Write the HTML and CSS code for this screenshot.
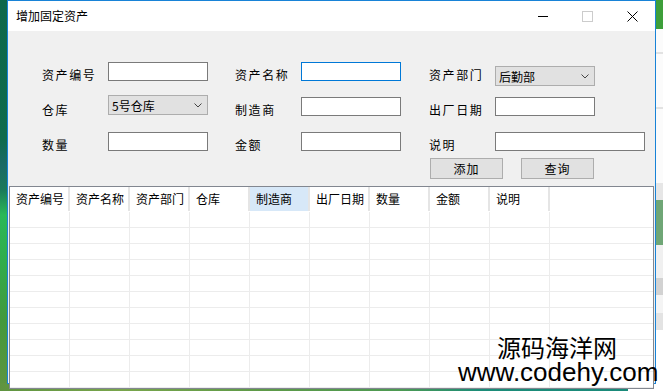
FILE: index.html
```html
<!DOCTYPE html>
<html lang="zh-CN">
<head>
    <meta charset="UTF-8">
    <title>增加固定资产</title>
    <link rel="stylesheet" href="styles.css">
</head>
<body>
    <div class="desk-right"></div>
    <div class="desk-bottom"></div>

    <div class="window">
        <div class="titlebar">
            <span class="title">增加固定资产</span>
            <div class="caption-btns">
                <span class="cap-btn">
                    <svg width="10" height="10" viewBox="0 0 10 10"><path d="M0 5.5H10" stroke="#000" stroke-width="1"/></svg>
                </span>
                <span class="cap-btn">
                    <svg width="11" height="11" viewBox="0 0 11 11"><rect x="0.5" y="0.5" width="10" height="10" fill="none" stroke="#ccc" stroke-width="1"/></svg>
                </span>
                <span class="cap-btn">
                    <svg width="11" height="11" viewBox="0 0 11 11"><path d="M0.5 0.5L10.5 10.5M10.5 0.5L0.5 10.5" stroke="#000" stroke-width="1"/></svg>
                </span>
            </div>
        </div>

        <div class="client">
            <div class="form">
                <div class="field">
                    <label>资产编号</label>
                    <input class="textbox" type="text">
                </div>
                <div class="field">
                    <label>资产名称</label>
                    <input class="textbox focused" type="text">
                </div>
                <div class="field">
                    <label>资产部门</label>
                    <div class="combo combo-dept">
                        <span>后勤部</span>
                        <svg width="8" height="5" viewBox="0 0 8 5"><path d="M0.5 0.5L4 4L7.5 0.5" fill="none" stroke="#444" stroke-width="1"/></svg>
                    </div>
                </div>

                <div class="field">
                    <label>仓库</label>
                    <div class="combo combo-store">
                        <span>5号仓库</span>
                        <svg width="8" height="5" viewBox="0 0 8 5"><path d="M0.5 0.5L4 4L7.5 0.5" fill="none" stroke="#444" stroke-width="1"/></svg>
                    </div>
                </div>
                <div class="field">
                    <label>制造商</label>
                    <input class="textbox" type="text">
                </div>
                <div class="field">
                    <label>出厂日期</label>
                    <input class="textbox" type="text">
                </div>

                <div class="field">
                    <label>数量</label>
                    <input class="textbox" type="text">
                </div>
                <div class="field">
                    <label>金额</label>
                    <input class="textbox" type="text">
                </div>
                <div class="field">
                    <label>说明</label>
                    <input class="textbox wide" type="text">
                </div>

                <div class="actions">
                    <button class="btn">添加</button>
                    <button class="btn">查询</button>
                </div>
            </div>

            <div class="grid">
                <div class="grid-row grid-head">
                    <div class="cell">资产编号</div>
                    <div class="cell">资产名称</div>
                    <div class="cell">资产部门</div>
                    <div class="cell">仓库</div>
                    <div class="cell selected">制造商</div>
                    <div class="cell">出厂日期</div>
                    <div class="cell">数量</div>
                    <div class="cell">金额</div>
                    <div class="cell">说明</div>
                    <div class="cell filler"></div>
                </div>
                <div class="grid-body" id="gridBody"></div>
            </div>
        </div>
    </div>

    <div class="watermark">
        <div class="wm-cn">源码海洋网</div>
        <div class="wm-en">www.codehy.com</div>
    </div>

    <script>
        // empty rows of the data grid
        let body = document.getElementById('gridBody');
        for (let r = 0; r < 11; r++) {
            let row = document.createElement('div');
            row.className = 'grid-row';
            for (let c = 0; c < 10; c++) {
                let cell = document.createElement('div');
                cell.className = c === 9 ? 'cell filler' : 'cell';
                row.appendChild(cell);
            }
            body.appendChild(row);
        }
    </script>
</body>
</html>
```

FILE: styles.css
```css
body {
    margin: 0;
    width: 663px;
    height: 391px;
    position: relative;
    overflow: hidden;
    font-family: "Noto Sans CJK SC", "Noto Sans", sans-serif;
    background: linear-gradient(to bottom,
        #0e684a 0, #0f6b4c 140px, #1a6a66 165px, #1b7a5a 190px,
        #2bb857 215px, #30ad4c 260px, #43993d 320px, #5f9440 391px);
}

.desk-right {
    position: absolute;
    left: 656px;
    top: 0;
    width: 7px;
    height: 391px;
    background: linear-gradient(to bottom,
        #3d9f3a 0, #3d9f3a 29px, #fbfbfb 29px, #fbfbfb 52px, #e2e2e2 52px, #e2e2e2 54px,
        #fbfbfb 54px, #fbfbfb 107px, #e2e2e2 107px, #e2e2e2 109px, #fbfbfb 109px,
        #fbfbfb 183px, #e6e6e6 183px, #e6e6e6 200px, #6fa676 200px, #6fa676 245px,
        #f0f0f0 245px, #f0f0f0 278px, #d2d2d2 278px, #d2d2d2 295px, #f4f4f4 295px,
        #f4f4f4 313px, #e3e3e3 313px, #e3e3e3 330px, #fff 330px);
}

.desk-bottom {
    position: absolute;
    left: 0;
    bottom: 0;
    width: 663px;
    height: 8px;
    background: linear-gradient(to right,
        #5f9440 0, #79a54c 120px, #5e9a48 260px, #4d9a52 400px, #1b8c78 480px,
        #1a8a7a 628px, #fff 628px);
}

.window {
    position: absolute;
    left: 7px;
    top: 0;
    width: 649px;
    height: 384px;
    box-sizing: border-box;
    border: 1px solid #1883d7;
    background-color: #f0f0f0;
    display: flex;
    flex-direction: column;
}

.titlebar {
    height: 30px;
    flex-shrink: 0;
    background-color: #fff;
    display: flex;
    align-items: center;
    justify-content: space-between;
}

.title {
    font-size: 12px;
    color: #000;
    padding-left: 8px;
    line-height: 30px;
}

.caption-btns {
    display: flex;
    height: 30px;
}

.cap-btn {
    width: 45px;
    display: flex;
    align-items: center;
    justify-content: center;
}

.client {
    flex: 1;
    display: flex;
    flex-direction: column;
}

.form {
    height: 155px;
    box-sizing: border-box;
    padding: 31px 0 0 34px;
    display: grid;
    grid-template-columns: 193px 194px 215px;
    grid-template-rows: 35px 35px 26px 21px;
}

.field {
    display: flex;
    align-items: flex-start;
}

.field label {
    width: 66px;
    flex-shrink: 0;
    padding-top: 3px;
    font-size: 12px;
    line-height: 19px;
    letter-spacing: 1.6px;
    color: #000;
}

.textbox {
    width: 100px;
    height: 19px;
    box-sizing: border-box;
    margin: 0;
    padding: 0 2px;
    border: 1px solid #7a7a7a;
    background-color: #fff;
    outline: none;
}

.textbox.focused {
    border-color: #0078d7;
}

.textbox.wide {
    width: 150px;
}

.combo {
    width: 100px;
    height: 20px;
    box-sizing: border-box;
    border: 1px solid #adadad;
    background-color: #e1e1e1;
    display: flex;
    align-items: center;
    justify-content: space-between;
    padding: 0 5px 0 3px;
    font-size: 12px;
    color: #000;
}

.combo-dept {
    margin-top: 4px;
}

.combo-store {
    margin-top: -2px;
}

.actions {
    grid-column: 3;
    display: flex;
    gap: 18px;
    padding-left: 1px;
}

.btn {
    width: 73px;
    height: 21px;
    box-sizing: border-box;
    border: 1px solid #adadad;
    background-color: #e1e1e1;
    font-family: "Noto Sans CJK SC", sans-serif;
    font-size: 12px;
    letter-spacing: 1px;
    color: #000;
    padding: 0;
}

.grid {
    flex: 1;
    margin: 0 1px 1px;
    border: 1px solid #828790;
    background-color: #fff;
    overflow: hidden;
}

.grid-row {
    display: grid;
    grid-template-columns: repeat(9, 60px) 1fr;
    height: 16px;
    box-sizing: border-box;
    border-bottom: 1px solid #ececec;
}

.grid-row .cell {
    border-right: 1px solid #ececec;
}

.grid-row .cell.filler {
    border-right: none;
}

.grid-head {
    height: 24px;
    border-bottom: none;
}

.grid-head .cell {
    font-size: 12px;
    line-height: 24px;
    padding-left: 6px;
    color: #000;
    border-right: 2px solid #e5e5e5;
    white-space: nowrap;
    overflow: hidden;
}

.grid-head .cell.selected {
    background-color: #d7e8f8;
}

.grid-body {
    padding-top: 1px;
}

.watermark {
    position: absolute;
    left: 458px;
    top: 336px;
    color: #000;
}

.wm-cn {
    font-family: "Noto Sans CJK SC", sans-serif;
    font-size: 24px;
    line-height: 22px;
    padding-left: 39px;
}

.wm-en {
    font-family: "Liberation Sans", Arial, sans-serif;
    font-size: 26px;
    line-height: 26px;
    margin-top: 1px;
}
```
